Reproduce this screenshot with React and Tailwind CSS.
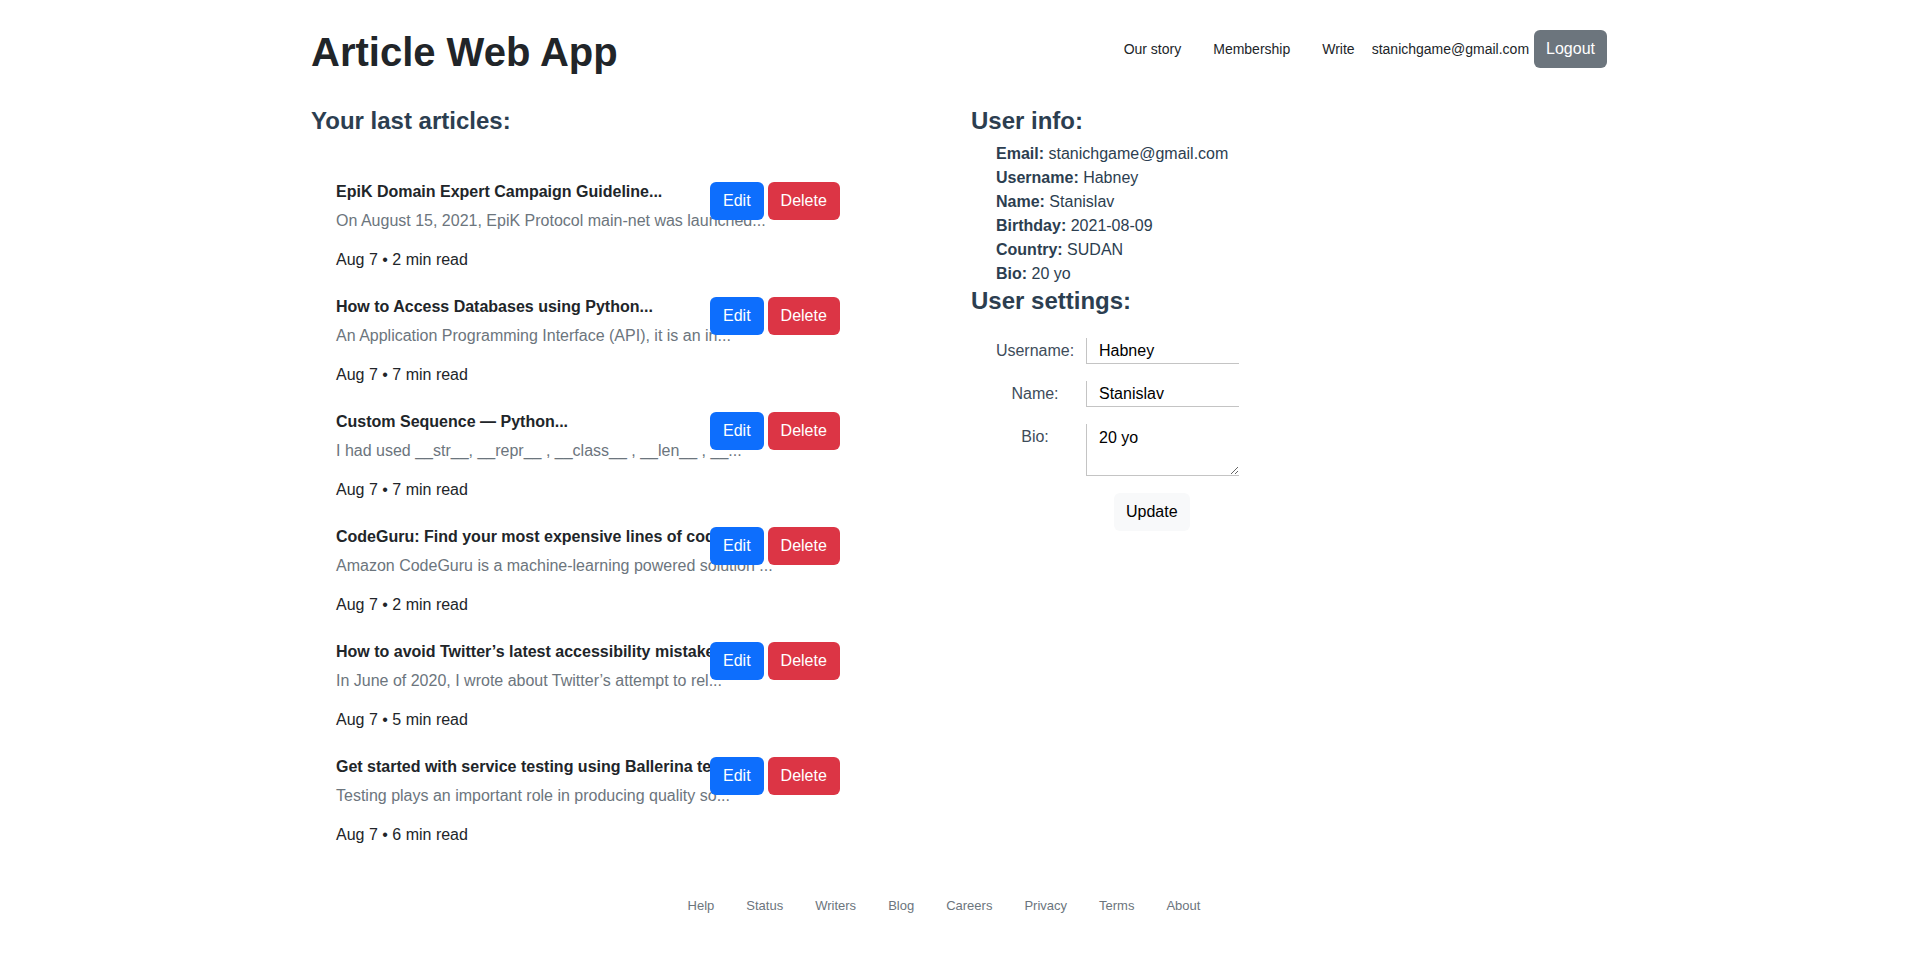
import React from 'react'

const articles = [
  {
    title: 'EpiK Domain Expert Campaign Guideline...',
    desc: 'On August 15, 2021, EpiK Protocol main-net was launched...',
    meta: 'Aug 7 • 2 min read'
  },
  {
    title: 'How to Access Databases using Python...',
    desc: 'An Application Programming Interface (API), it is an in...',
    meta: 'Aug 7 • 7 min read'
  },
  {
    title: 'Custom Sequence — Python...',
    desc: 'I had used __str__, __repr__ , __class__ , __len__ , __...',
    meta: 'Aug 7 • 7 min read'
  },
  {
    title: 'CodeGuru: Find your most expensive lines of code...',
    desc: 'Amazon CodeGuru is a machine-learning powered solution ...',
    meta: 'Aug 7 • 2 min read'
  },
  {
    title: 'How to avoid Twitter’s latest accessibility mistakes...',
    desc: 'In June of 2020, I wrote about Twitter’s attempt to rel...',
    meta: 'Aug 7 • 5 min read'
  },
  {
    title: 'Get started with service testing using Ballerina test...',
    desc: 'Testing plays an important role in producing quality so...',
    meta: 'Aug 7 • 6 min read'
  }
]

const info = [
  ['Email:', 'stanichgame@gmail.com'],
  ['Username:', 'Habney'],
  ['Name:', 'Stanislav'],
  ['Birthday:', '2021-08-09'],
  ['Country:', 'SUDAN'],
  ['Bio:', '20 yo']
]

const footerLinks = ['Help', 'Status', 'Writers', 'Blog', 'Careers', 'Privacy', 'Terms', 'About']

function ArticleItem({ article }) {
  return (
    <div className="flex items-start">
      <div className="w-[374px] shrink-0 whitespace-nowrap">
        <div className="text-[16px] leading-[24px] font-bold text-[#212529]">{article.title}</div>
        <div className="mt-[5px] text-[16px] leading-[24px] text-[#6c757d]">{article.desc}</div>
        <div className="mt-[15px] text-[16px] leading-[24px] text-[#212529]">{article.meta}</div>
      </div>
      <div className="relative z-10 mt-[2px] flex gap-[4px]">
        <button className="h-[38px] px-[13px] rounded-[6px] bg-[#0d6efd] text-white text-[16px] leading-[24px]">
          Edit
        </button>
        <button className="h-[38px] px-[13px] rounded-[6px] bg-[#dc3545] text-white text-[16px] leading-[24px]">
          Delete
        </button>
      </div>
    </div>
  )
}

export default function App() {
  return (
    <div className="min-h-screen bg-white font-['Liberation_Sans',Arial,sans-serif] text-[#2c3e50]">
      <div className="w-[1296px] mx-auto">
        {/* header */}
        <header className="mt-[25px] h-[48px] flex items-center justify-between">
          <h1 className="pt-[6px] text-[40px] leading-[48px] font-bold text-[#212529]">Article Web App</h1>
          <nav className="flex items-center text-[14px] leading-[21px] text-[#212529]">
            <a className="px-4">Our story</a>
            <a className="px-4">Membership</a>
            <a className="pl-4 pr-[17px]">Write</a>
            <span>stanichgame@gmail.com</span>
            <button className="ml-[5px] h-[38px] px-[12px] rounded-[6px] bg-[#6c757d] text-white text-[16px] leading-[24px]">
              Logout
            </button>
          </nav>
        </header>

        <main className="mt-[33px] grid grid-cols-2 gap-x-[24px]">
          {/* left column */}
          <section>
            <h4 className="text-[24px] leading-[29px] font-bold">Your last articles:</h4>
            <div className="mt-[45px] pl-[25px] flex flex-col gap-[23px]">
              {articles.map((a, i) => (
                <ArticleItem key={i} article={a} />
              ))}
            </div>
          </section>

          {/* right column */}
          <section>
            <h4 className="text-[24px] leading-[29px] font-bold">User info:</h4>
            <ul className="mt-[7px] pl-[25px] text-[16px] leading-[24px]">
              {info.map(([k, v]) => (
                <li key={k}>
                  <span className="font-bold">{k}</span> {v}
                </li>
              ))}
            </ul>
            <h4 className="text-[24px] leading-[29px] font-bold">User settings:</h4>

            <div className="mt-[23px] pl-[24px] flex flex-col gap-[17px] text-[16px]">
              <div className="flex items-start gap-[11px]">
                <label className="w-[80px] pt-px text-center leading-[24px] text-[#3e4c5a]">Username:</label>
                <input
                  defaultValue="Habney"
                  className="w-[153px] h-[26px] pl-[12px] border-0 border-l border-b border-[#c4c4c4] text-black outline-none"
                />
              </div>
              <div className="flex items-start gap-[11px]">
                <label className="w-[80px] pt-px text-center leading-[24px] text-[#3e4c5a]">Name:</label>
                <input
                  defaultValue="Stanislav"
                  className="w-[153px] h-[26px] pl-[12px] border-0 border-l border-b border-[#c4c4c4] text-black outline-none"
                />
              </div>
              <div className="flex items-start gap-[11px]">
                <label className="w-[80px] pt-px text-center leading-[24px] text-[#3e4c5a]">Bio:</label>
                <textarea
                  defaultValue="20 yo"
                  className="w-[153px] h-[52px] pl-[12px] pt-[2px] border-0 border-l border-b border-[#c4c4c4] text-black outline-none leading-[24px]"
                />
              </div>
            </div>
            <button className="mt-[17px] ml-[143px] h-[38px] px-[12px] rounded-[6px] bg-[#f8f9fa] text-[#000] text-[16px] leading-[24px]">
              Update
            </button>
          </section>
        </main>

        <footer className="mt-[49px] pr-[30px] flex justify-center gap-[32px] text-[13px] leading-[20px] text-[#6c757d]">
          {footerLinks.map(l => (
            <a key={l}>{l}</a>
          ))}
        </footer>
      </div>
    </div>
  )
}
